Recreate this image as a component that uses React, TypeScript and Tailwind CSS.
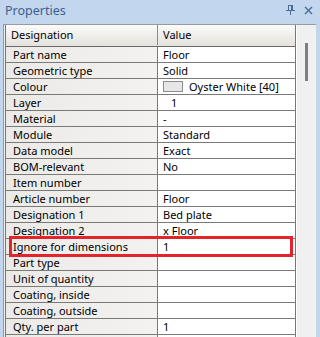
import React from "react";

const rows: { k: string; v: string; type?: "colour" | "indent" }[] = [
  { k: "Part name", v: "Floor" },
  { k: "Geometric type", v: "Solid" },
  { k: "Colour", v: "Oyster White [40]", type: "colour" },
  { k: "Layer", v: "1", type: "indent" },
  { k: "Material", v: "-" },
  { k: "Module", v: "Standard" },
  { k: "Data model", v: "Exact" },
  { k: "BOM-relevant", v: "No" },
  { k: "Item number", v: "" },
  { k: "Article number", v: "Floor" },
  { k: "Designation 1", v: "Bed plate" },
  { k: "Designation 2", v: "x Floor" },
  { k: "Ignore for dimensions", v: "1" },
  { k: "Part type", v: "" },
  { k: "Unit of quantity", v: "" },
  { k: "Coating, inside", v: "" },
  { k: "Coating, outside", v: "" },
  { k: "Qty. per part", v: "1" },
  { k: "", v: "" },
];

export default function App() {
  return (
    <div
      className="relative w-[320px] h-[337px] overflow-hidden bg-[#c2d6ee] text-[11px] text-black"
      style={{ fontFamily: '"Noto Sans", "Open Sans", sans-serif' }}
    >
      {/* title bar */}
      <div className="h-[24px] flex items-center justify-between pl-[5px] pr-[7px]">
        <span className="text-[12.5px] text-[#3d5f8e] leading-none -mt-[2px]">Properties</span>
        <div className="flex items-center gap-[9px] -mt-[4px]">
          <svg width="9" height="10" viewBox="0 0 9 10">
            <rect x="2.5" y="0.5" width="4" height="5" fill="none" stroke="#4a6b95" />
            <rect x="5" y="1" width="1" height="4" fill="#4a6b95" />
            <rect x="0" y="5" width="9" height="1" fill="#4a6b95" />
            <rect x="4" y="6" width="1" height="4" fill="#4a6b95" />
          </svg>
          <svg width="9" height="9" viewBox="0 0 9 9">
            <path d="M1 1 L8 8 M8 1 L1 8" stroke="#4a6b95" strokeWidth="1.4" />
          </svg>
        </div>
      </div>

      {/* panel */}
      <div className="ml-[3px] mr-[4px] h-[313px] overflow-hidden bg-[#f0f0f0] border-t border-l border-[#9a9a9a] flex pl-[1px]">
        {/* grid */}
        <div className="w-[291px] shrink-0 flex flex-col border-l border-[#777777] border-r">
          {/* header */}
          <div className="h-[22px] shrink-0 flex border-b border-[#6a6a6a] bg-gradient-to-b from-[#fbfbfa] to-[#e5e2dd] pb-[1px]">
            <div className="w-[152px] pl-[5px] flex items-center border-r border-[#8a8a8a]">
              Designation
            </div>
            <div className="flex-1 pl-[5px] flex items-center">Value</div>
          </div>
          {rows.map((r, i) => (
            <div key={i} className="h-[16px] shrink-0 flex border-b border-[#7a7a7a] leading-[15px]">
              <div className="w-[152px] pl-[7px] flex items-center bg-gradient-to-r from-[#ebeae7] to-[#f3f2f0] border-r border-[#7a7a7a] whitespace-nowrap">
                {r.k}
              </div>
              <div
                className={
                  "flex-1 flex items-center bg-white whitespace-nowrap " +
                  (r.type === "indent" ? "pl-[13px]" : "pl-[5px]")
                }
              >
                {r.type === "colour" && (
                  <span className="inline-block w-[20px] h-[11px] border border-[#8c8c8c] bg-[#e6e6e6] mr-[6px]" />
                )}
                {r.v}
              </div>
            </div>
          ))}
        </div>
        {/* scrollbar */}
        <div className="relative w-[20px] shrink-0 bg-[#f0f0f0] border-l border-white">
          <div className="absolute left-[8px] top-[18px] w-[3px] h-[38px] bg-[#7f7f7f]" />
        </div>
      </div>

      {/* red highlight */}
      <div className="absolute left-[9px] top-[236px] w-[284px] h-[21px] border-[3px] border-[#e3242b]" />
    </div>
  );
}
